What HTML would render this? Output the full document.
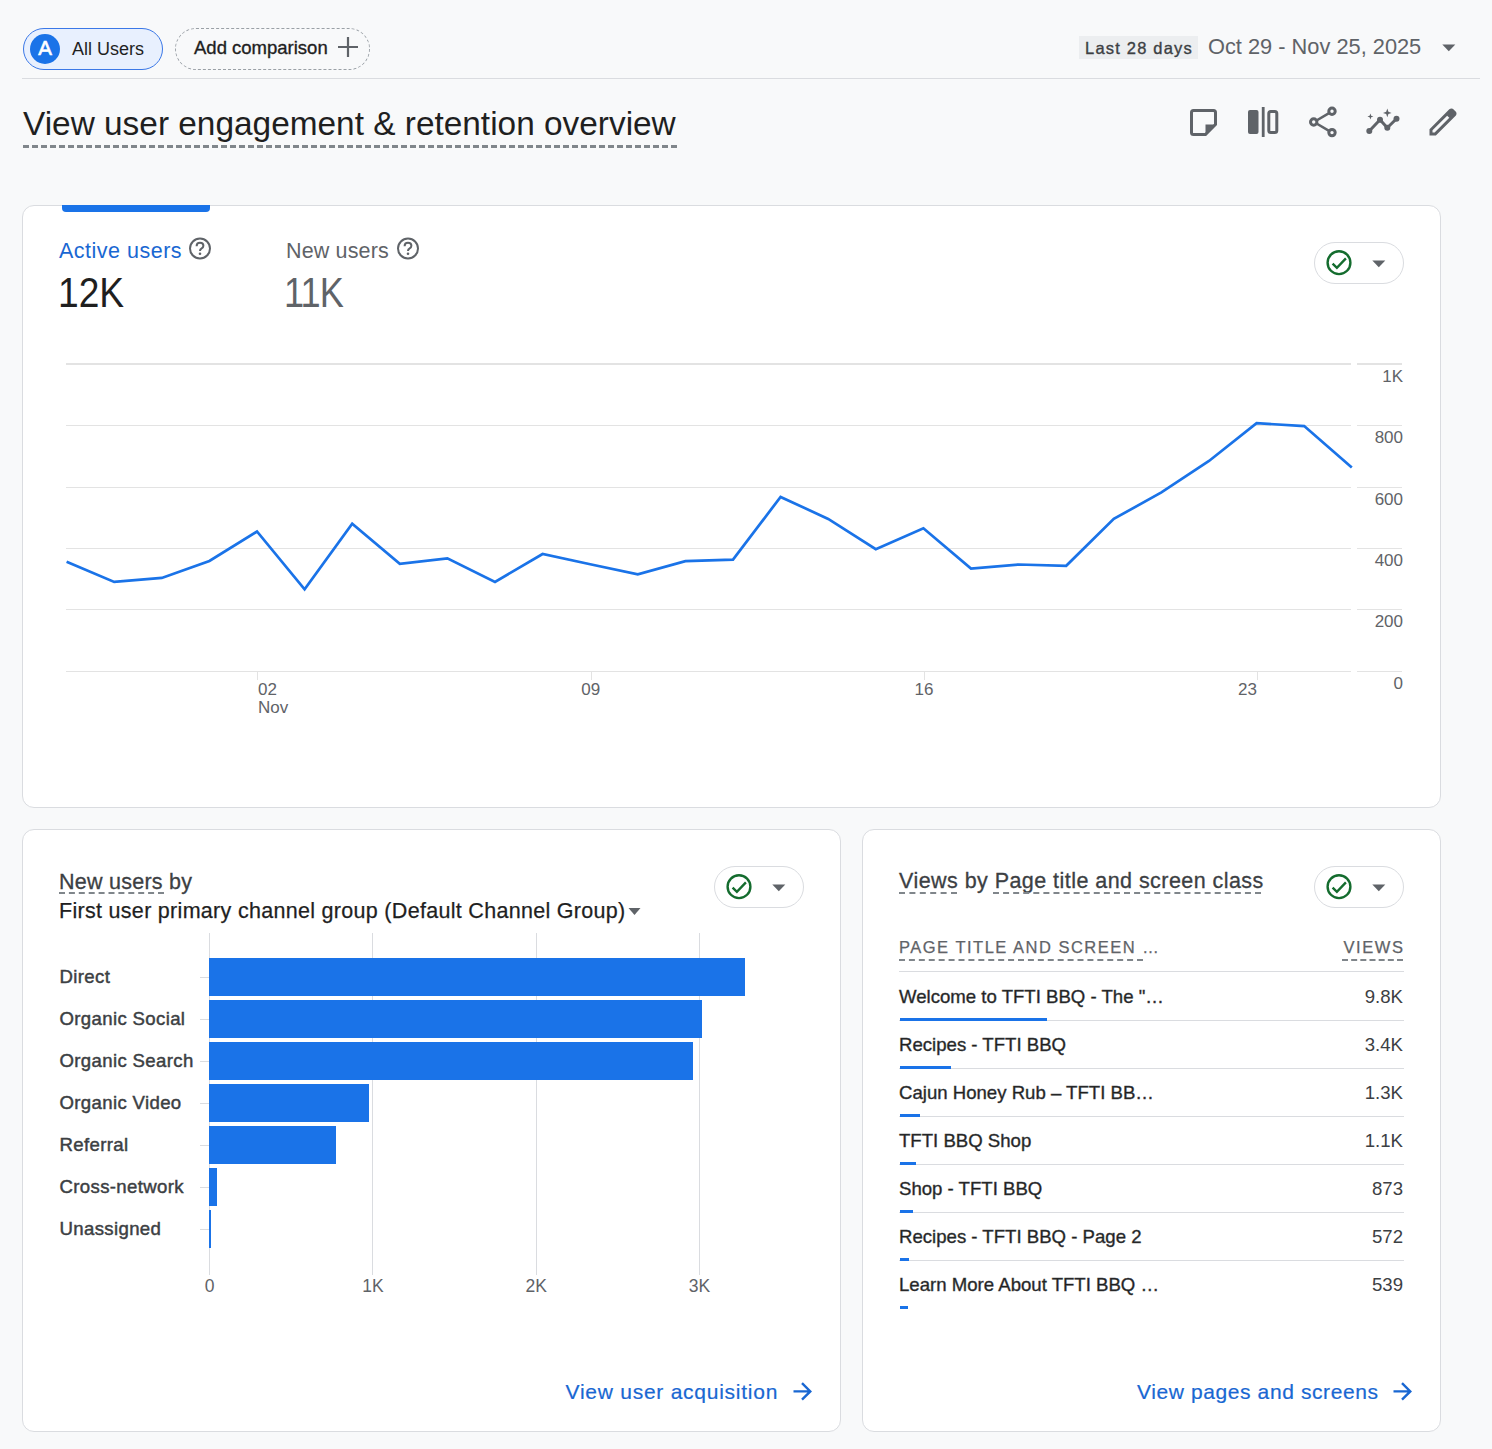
<!DOCTYPE html>
<html><head><meta charset="utf-8">
<style>
*{box-sizing:border-box;margin:0;padding:0}
html,body{width:1492px;height:1449px;overflow:hidden;background:#f8f9fa;font-family:"Liberation Sans",sans-serif;color:#1f1f1f}
.a{position:absolute;white-space:nowrap;line-height:1}
.card{position:absolute;background:#fff;border:1px solid #dadce0;border-radius:12px}
.chip{position:absolute;border-radius:21px}
.pill{position:absolute;width:90px;height:42px;border:1px solid #dadce0;border-radius:21px;background:#fff}
.dash{position:absolute;height:2px;background-image:linear-gradient(to right,#80868b 0,#80868b 6px,transparent 6px);background-size:9px 2px;background-repeat:repeat-x}
.gl{position:absolute;height:1px;background:#e6e6e6}
.med{-webkit-text-stroke:0.35px currentColor}
</style></head><body>

<!-- top bar -->
<div class="chip" style="left:23px;top:28px;width:140px;height:42px;background:#e8f0fe;border:1px solid #3b78e7"></div>
<div style="position:absolute;left:30px;top:34px;width:30px;height:30px;border-radius:50%;background:#1a73e8"></div>
<div class="a" style="left:35px;top:38px;font-size:20.5px;color:#fff;width:20px;text-align:center;-webkit-text-stroke:0.6px #fff">A</div>
<div class="a" style="left:72px;top:40px;font-size:18px;color:#1f1f1f">All Users</div>

<div class="chip" style="left:175px;top:28px;width:195px;height:42px;border:1px dashed #9aa0a6"></div>
<div class="a med" style="left:194px;top:39px;font-size:18.5px;color:#1f1f1f">Add comparison</div>
<svg style="position:absolute;left:337px;top:36px" width="22" height="22" viewBox="0 0 22 22"><path d="M11 1V21M1 11H21" stroke="#5f6368" stroke-width="2.2"/></svg>

<div style="position:absolute;left:1079px;top:36px;width:119px;height:23px;background:#eceef0"></div>
<div class="a med" style="left:1085px;top:40px;font-size:16.5px;letter-spacing:1.2px;color:#3c4043">Last 28 days</div>
<div class="a" style="left:1208px;top:36px;font-size:21.8px;color:#5f6368">Oct 29 - Nov 25, 2025</div>
<svg style="position:absolute;left:1442px;top:44px" width="14" height="8" viewBox="0 0 14 8"><path d="M0.3 0.5H13.3L6.8 7.2Z" fill="#5f6368"/></svg>

<div style="position:absolute;left:22px;top:78px;width:1458px;height:1px;background:#dadce0"></div>

<!-- title -->
<div class="a" style="left:23px;top:107px;font-size:33.4px;color:#1f1f1f">View user engagement &amp; retention overview</div>
<div class="dash" style="left:23px;top:145px;width:655px;height:3px;background-size:9px 3px"></div>

<!-- toolbar icons -->
<svg style="position:absolute;left:1186px;top:105px" width="34" height="34" viewBox="0 0 34 34">
  <path d="M7.5 5.5H27.5Q29.5 5.5 29.5 7.5V19.5L19.5 29.5H7.5Q5.5 29.5 5.5 27.5V7.5Q5.5 5.5 7.5 5.5Z" fill="none" stroke="#5f6368" stroke-width="3"/>
  <path d="M19.5 19.5H29.5L19.5 29.5Z" fill="#5f6368"/>
</svg>
<svg style="position:absolute;left:1246px;top:105px" width="34" height="34" viewBox="0 0 34 34">
  <rect x="2" y="5" width="10.5" height="24" rx="2" fill="#5f6368"/>
  <rect x="15.8" y="2" width="2.8" height="30" fill="#5f6368"/>
  <rect x="22.8" y="6.5" width="8" height="21" rx="2" fill="none" stroke="#5f6368" stroke-width="3"/>
</svg>
<svg style="position:absolute;left:1306px;top:105px" width="34" height="34" viewBox="0 0 34 34">
  <path d="M8 17L26 6.3M8 17L26 27.6" stroke="#5f6368" stroke-width="2.6"/>
  <circle cx="26" cy="6.3" r="3.2" fill="#f8f9fa" stroke="#5f6368" stroke-width="3"/>
  <circle cx="7.7" cy="17" r="3.2" fill="#f8f9fa" stroke="#5f6368" stroke-width="3"/>
  <circle cx="26" cy="27.6" r="3.2" fill="#f8f9fa" stroke="#5f6368" stroke-width="3"/>
</svg>
<svg style="position:absolute;left:1366px;top:105px" width="34" height="34" viewBox="0 0 34 34">
  <path d="M3.3 26L14 14.7L21.3 22.8L30.5 13.7" fill="none" stroke="#5f6368" stroke-width="3" stroke-linejoin="round"/>
  <circle cx="3.3" cy="26" r="3" fill="#5f6368"/><circle cx="14" cy="14.7" r="3" fill="#5f6368"/>
  <circle cx="21.3" cy="22.8" r="3" fill="#5f6368"/><circle cx="30.5" cy="13.7" r="3" fill="#5f6368"/>
  <path d="M4.4 8.5L5.2 10.7L7.4 11.5L5.2 12.3L4.4 14.5L3.6 12.3L1.4 11.5L3.6 10.7Z" fill="#5f6368"/>
  <path d="M21.3 3.5L22.4 6.8L25.6 7.9L22.4 9L21.3 12.3L20.2 9L17 7.9L20.2 6.8Z" fill="#5f6368"/>
</svg>
<svg style="position:absolute;left:1424.5px;top:103.5px" width="36" height="36" viewBox="0 -960 960 960"><path d="M200-200h57l391-391-57-57-391 391v57Zm-80 80v-170l528-527q12-11 26.5-17t30.5-6q16 0 31 6t26 18l55 56q12 11 17.5 26t5.5 30q0 16-5.5 30.5T817-647L290-120H120Zm640-584-56-56 56 56Zm-141 85-28-29 57 57-29-28Z" fill="#5f6368"/></svg>

<!-- CARD 1 -->
<div class="card" style="left:22px;top:205px;width:1419px;height:603px"></div>
<div style="position:absolute;left:62px;top:205px;width:148px;height:7px;background:#1a73e8;border-radius:0 0 4px 4px"></div>


<!-- card1 content -->
<div class="a" style="left:59px;top:241px;font-size:21.5px;letter-spacing:0.5px;color:#1967d2">Active users</div>
<svg style="position:absolute;left:187px;top:236px" width="26" height="26" viewBox="0 0 26 26"><circle cx="13" cy="12.5" r="10" fill="none" stroke="#5f6368" stroke-width="2"/><path d="M9.6 10.2Q9.6 6.8 13 6.8Q16.4 6.8 16.4 9.8Q16.4 11.6 14.4 12.6Q13 13.4 13 15" fill="none" stroke="#5f6368" stroke-width="2"/><circle cx="13" cy="17.8" r="1.3" fill="#5f6368"/></svg>
<div class="a" style="left:286px;top:241px;font-size:21.5px;letter-spacing:0.15px;color:#5f6368">New users</div>
<svg style="position:absolute;left:395px;top:236px" width="26" height="26" viewBox="0 0 26 26"><circle cx="13" cy="12.5" r="10" fill="none" stroke="#5f6368" stroke-width="2"/><path d="M9.6 10.2Q9.6 6.8 13 6.8Q16.4 6.8 16.4 9.8Q16.4 11.6 14.4 12.6Q13 13.4 13 15" fill="none" stroke="#5f6368" stroke-width="2"/><circle cx="13" cy="17.8" r="1.3" fill="#5f6368"/></svg>
<div class="a" style="left:58px;top:272px;font-size:42px;transform:scaleX(0.885);transform-origin:0 0;color:#1f1f1f">12K</div>
<div class="a" style="left:284px;top:272px;font-size:42px;letter-spacing:-1px;transform:scaleX(0.86);transform-origin:0 0;color:#5f6368">11K</div>

<div class="pill" style="left:1314px;top:242px"></div>
<svg style="position:absolute;left:1325px;top:248px" width="28" height="28" viewBox="0 0 28 28"><circle cx="14" cy="14.7" r="11.4" fill="none" stroke="#146c2e" stroke-width="2.4"/><path d="M7.6 15.6L11.9 19.9L20.9 10.4" fill="none" stroke="#146c2e" stroke-width="2.4"/></svg>
<svg style="position:absolute;left:1372px;top:260px" width="14" height="8" viewBox="0 0 14 8"><path d="M0.3 0.5H13.3L6.8 7.2Z" fill="#5f6368"/></svg>

<svg style="position:absolute;left:0;top:0" width="1492" height="1449" font-family="Liberation Sans" font-size="17" fill="#5f6368">
<path d="M66 364H1351M1357 364H1402" stroke="#e3e3e3" stroke-width="2"/>
<text x="1403" y="381.8" text-anchor="end">1K</text>
<path d="M66 425.5H1351M1357 425.5H1402" stroke="#e3e3e3" stroke-width="1"/>
<text x="1403" y="443.2" text-anchor="end">800</text>
<path d="M66 487.5H1351M1357 487.5H1402" stroke="#e3e3e3" stroke-width="1"/>
<text x="1403" y="504.6" text-anchor="end">600</text>
<path d="M66 548.5H1351M1357 548.5H1402" stroke="#e3e3e3" stroke-width="1"/>
<text x="1403" y="566.0" text-anchor="end">400</text>
<path d="M66 609.5H1351M1357 609.5H1402" stroke="#e3e3e3" stroke-width="1"/>
<text x="1403" y="627.4" text-anchor="end">200</text>
<path d="M66 671.5H1351M1357 671.5H1402" stroke="#e3e3e3" stroke-width="1"/>
<text x="1403" y="688.8" text-anchor="end">0</text>
<path d="M257.5 671V680" stroke="#e3e3e3" stroke-width="1"/>
<path d="M591.5 671V680" stroke="#e3e3e3" stroke-width="1"/>
<path d="M924.5 671V680" stroke="#e3e3e3" stroke-width="1"/>
<path d="M1257.5 671V680" stroke="#e3e3e3" stroke-width="1"/>

<text x="258" y="695">02</text><text x="258" y="713">Nov</text>
<text x="590.7" y="695" text-anchor="middle">09</text>
<text x="924" y="695" text-anchor="middle">16</text>
<text x="1257" y="695" text-anchor="end">23</text>
<polyline points="66.6,561.8 114.2,581.9 161.8,577.9 209.4,561.0 257.0,531.5 304.6,589.4 352.2,523.7 399.8,563.9 447.4,558.3 495.0,581.9 542.6,554.0 590.2,564.2 637.8,574.4 685.4,561.2 733.0,559.6 780.6,496.9 828.2,518.9 875.8,549.2 923.4,528.3 971.0,568.5 1018.6,564.5 1066.2,565.8 1113.8,518.9 1161.4,492.4 1209.0,461.0 1256.6,423.2 1304.2,426.1 1351.8,467.6" fill="none" stroke="#1a73e8" stroke-width="2.7" stroke-linejoin="miter"/>
</svg>

<!-- CARD 2 -->
<div class="card" style="left:22px;top:829px;width:819px;height:603px"></div>
<div class="a" style="left:59px;top:871.5px;font-size:21.5px;color:#3c4043;letter-spacing:0.25px;-webkit-text-stroke:0.3px #3c4043">New users by</div>
<div style="position:absolute;left:59px;top:892px;width:105px;border-top:2px dashed #80868b"></div>
<div class="a" style="left:59px;top:901.4px;font-size:21.5px;color:#1f1f1f;letter-spacing:0.3px;-webkit-text-stroke:0.25px #1f1f1f">First user primary channel group (Default Channel Group)</div>
<svg style="position:absolute;left:628px;top:907px" width="13" height="9" viewBox="0 0 13 9"><path d="M0.5 1H12.5L6.5 8Z" fill="#5f6368"/></svg>
<div class="pill" style="left:714px;top:866px"></div>
<svg style="position:absolute;left:725px;top:872px" width="28" height="28" viewBox="0 0 28 28"><circle cx="14" cy="14.7" r="11.4" fill="none" stroke="#146c2e" stroke-width="2.4"/><path d="M7.6 15.6L11.9 19.9L20.9 10.4" fill="none" stroke="#146c2e" stroke-width="2.4"/></svg>
<svg style="position:absolute;left:772px;top:884px" width="14" height="8" viewBox="0 0 14 8"><path d="M0.3 0.5H13.3L6.8 7.2Z" fill="#5f6368"/></svg>
<svg style="position:absolute;left:0;top:829px" width="841" height="603" font-family="Liberation Sans" font-size="17.5" fill="#5f6368">
<path d="M209.5 104V446" stroke="#dadce0" stroke-width="1"/>
<path d="M372.5 104V446" stroke="#dadce0" stroke-width="1"/>
<path d="M536.5 104V446" stroke="#dadce0" stroke-width="1"/>
<path d="M699.5 104V446" stroke="#dadce0" stroke-width="1"/>
<path d="M200 148.5H209" stroke="#dadce0" stroke-width="1"/>
<rect x="209" y="129" width="536" height="38" fill="#1a73e8"/>
<path d="M200 190.5H209" stroke="#dadce0" stroke-width="1"/>
<rect x="209" y="171" width="493" height="38" fill="#1a73e8"/>
<path d="M200 232.5H209" stroke="#dadce0" stroke-width="1"/>
<rect x="209" y="213" width="484" height="38" fill="#1a73e8"/>
<path d="M200 274.5H209" stroke="#dadce0" stroke-width="1"/>
<rect x="209" y="255" width="160" height="38" fill="#1a73e8"/>
<path d="M200 316.5H209" stroke="#dadce0" stroke-width="1"/>
<rect x="209" y="297" width="127" height="38" fill="#1a73e8"/>
<path d="M200 358.5H209" stroke="#dadce0" stroke-width="1"/>
<rect x="209" y="339" width="8" height="38" fill="#1a73e8"/>
<path d="M200 400.5H209" stroke="#dadce0" stroke-width="1"/>
<rect x="209" y="381" width="2" height="38" fill="#1a73e8"/>
<text x="209.5" y="463" text-anchor="middle">0</text>
<text x="373" y="463" text-anchor="middle">1K</text>
<text x="536.3" y="463" text-anchor="middle">2K</text>
<text x="699.4" y="463" text-anchor="middle">3K</text>
</svg>
<div class="a" style="left:59.5px;top:968.4px;font-size:18.6px;color:#3c4043;-webkit-text-stroke:0.45px #3c4043;letter-spacing:0.35px">Direct</div>
<div class="a" style="left:59.5px;top:1010.4px;font-size:18.6px;color:#3c4043;-webkit-text-stroke:0.45px #3c4043;letter-spacing:0.35px">Organic Social</div>
<div class="a" style="left:59.5px;top:1052.4px;font-size:18.6px;color:#3c4043;-webkit-text-stroke:0.45px #3c4043;letter-spacing:0.35px">Organic Search</div>
<div class="a" style="left:59.5px;top:1094.4px;font-size:18.6px;color:#3c4043;-webkit-text-stroke:0.45px #3c4043;letter-spacing:0.35px">Organic Video</div>
<div class="a" style="left:59.5px;top:1136.4px;font-size:18.6px;color:#3c4043;-webkit-text-stroke:0.45px #3c4043;letter-spacing:0.35px">Referral</div>
<div class="a" style="left:59.5px;top:1178.4px;font-size:18.6px;color:#3c4043;-webkit-text-stroke:0.45px #3c4043;letter-spacing:0.35px">Cross-network</div>
<div class="a" style="left:59.5px;top:1220.4px;font-size:18.6px;color:#3c4043;-webkit-text-stroke:0.45px #3c4043;letter-spacing:0.35px">Unassigned</div>
<div class="a" style="left:565.5px;top:1380.6px;font-size:21px;color:#1967d2;letter-spacing:0.75px;-webkit-text-stroke:0.2px #1967d2">View user acquisition</div>
<svg style="position:absolute;left:792px;top:1382px" width="20" height="20" viewBox="0 0 20 20"><path d="M1.5 9.4H18M10 1.2L18.3 9.4L10 17.6" fill="none" stroke="#1967d2" stroke-width="2.4"/></svg>

<!-- CARD 3 -->
<div class="card" style="left:862px;top:829px;width:579px;height:603px"></div>
<div class="a" style="left:899px;top:871.2px;font-size:21.5px;color:#3c4043;letter-spacing:0.45px;-webkit-text-stroke:0.3px #3c4043">Views by Page title and screen class</div>
<div style="position:absolute;left:899px;top:892px;width:58px;border-top:2px dashed #80868b"></div>
<div style="position:absolute;left:993px;top:892px;width:268px;border-top:2px dashed #80868b"></div>
<div class="pill" style="left:1314px;top:866px"></div>
<svg style="position:absolute;left:1325px;top:872px" width="28" height="28" viewBox="0 0 28 28"><circle cx="14" cy="14.7" r="11.4" fill="none" stroke="#146c2e" stroke-width="2.4"/><path d="M7.6 15.6L11.9 19.9L20.9 10.4" fill="none" stroke="#146c2e" stroke-width="2.4"/></svg>
<svg style="position:absolute;left:1372px;top:884px" width="14" height="8" viewBox="0 0 14 8"><path d="M0.3 0.5H13.3L6.8 7.2Z" fill="#5f6368"/></svg>
<div class="a" style="left:899px;top:938.9px;font-size:16.5px;color:#5f6368;letter-spacing:1.5px;-webkit-text-stroke:0.25px #5f6368">PAGE TITLE AND SCREEN …</div>
<div style="position:absolute;left:899px;top:959px;width:244px;border-top:2px dashed #80868b"></div>
<div class="a" style="right:89px;top:938.9px;font-size:16.5px;color:#5f6368;letter-spacing:1.6px;margin-right:-1.6px;-webkit-text-stroke:0.25px #5f6368">VIEWS</div>
<div style="position:absolute;left:1342px;top:959px;width:61px;border-top:2px dashed #80868b"></div>
<div style="position:absolute;left:899px;top:971px;width:505px;height:1px;background:#dadce0"></div>
<div style="position:absolute;left:899px;top:1020px;width:505px;height:1px;background:#dadce0"></div>
<div style="position:absolute;left:900px;top:1018px;width:147px;height:3px;background:#1a73e8"></div>
<div class="a" style="left:899px;top:987.8px;font-size:18.6px;color:#1f1f1f;-webkit-text-stroke:0.4px #3c4043;color:#1f1f1f">Welcome to TFTI BBQ - The &quot;…</div>
<div class="a" style="right:89px;top:987.8px;font-size:18.6px;color:#3c4043">9.8K</div>
<div style="position:absolute;left:899px;top:1068px;width:505px;height:1px;background:#dadce0"></div>
<div style="position:absolute;left:900px;top:1066px;width:51px;height:3px;background:#1a73e8"></div>
<div class="a" style="left:899px;top:1035.8px;font-size:18.6px;color:#1f1f1f;-webkit-text-stroke:0.4px #3c4043;color:#1f1f1f">Recipes - TFTI BBQ</div>
<div class="a" style="right:89px;top:1035.8px;font-size:18.6px;color:#3c4043">3.4K</div>
<div style="position:absolute;left:899px;top:1116px;width:505px;height:1px;background:#dadce0"></div>
<div style="position:absolute;left:900px;top:1114px;width:20px;height:3px;background:#1a73e8"></div>
<div class="a" style="left:899px;top:1083.8px;font-size:18.6px;color:#1f1f1f;-webkit-text-stroke:0.4px #3c4043;color:#1f1f1f">Cajun Honey Rub – TFTI BB…</div>
<div class="a" style="right:89px;top:1083.8px;font-size:18.6px;color:#3c4043">1.3K</div>
<div style="position:absolute;left:899px;top:1164px;width:505px;height:1px;background:#dadce0"></div>
<div style="position:absolute;left:900px;top:1162px;width:16px;height:3px;background:#1a73e8"></div>
<div class="a" style="left:899px;top:1131.8px;font-size:18.6px;color:#1f1f1f;-webkit-text-stroke:0.4px #3c4043;color:#1f1f1f">TFTI BBQ Shop</div>
<div class="a" style="right:89px;top:1131.8px;font-size:18.6px;color:#3c4043">1.1K</div>
<div style="position:absolute;left:899px;top:1212px;width:505px;height:1px;background:#dadce0"></div>
<div style="position:absolute;left:900px;top:1210px;width:13px;height:3px;background:#1a73e8"></div>
<div class="a" style="left:899px;top:1179.8px;font-size:18.6px;color:#1f1f1f;-webkit-text-stroke:0.4px #3c4043;color:#1f1f1f">Shop - TFTI BBQ</div>
<div class="a" style="right:89px;top:1179.8px;font-size:18.6px;color:#3c4043">873</div>
<div style="position:absolute;left:899px;top:1260px;width:505px;height:1px;background:#dadce0"></div>
<div style="position:absolute;left:900px;top:1258px;width:9px;height:3px;background:#1a73e8"></div>
<div class="a" style="left:899px;top:1227.8px;font-size:18.6px;color:#1f1f1f;-webkit-text-stroke:0.4px #3c4043;color:#1f1f1f">Recipes - TFTI BBQ - Page 2</div>
<div class="a" style="right:89px;top:1227.8px;font-size:18.6px;color:#3c4043">572</div>
<div style="position:absolute;left:900px;top:1306px;width:8px;height:3px;background:#1a73e8"></div>
<div class="a" style="left:899px;top:1275.8px;font-size:18.6px;color:#1f1f1f;-webkit-text-stroke:0.4px #3c4043;color:#1f1f1f">Learn More About TFTI BBQ …</div>
<div class="a" style="right:89px;top:1275.8px;font-size:18.6px;color:#3c4043">539</div>
<div class="a" style="left:1137px;top:1380.6px;font-size:21px;color:#1967d2;letter-spacing:0.6px;-webkit-text-stroke:0.2px #1967d2">View pages and screens</div>
<svg style="position:absolute;left:1392px;top:1382px" width="20" height="20" viewBox="0 0 20 20"><path d="M1.5 9.4H18M10 1.2L18.3 9.4L10 17.6" fill="none" stroke="#1967d2" stroke-width="2.4"/></svg>
</body></html>
